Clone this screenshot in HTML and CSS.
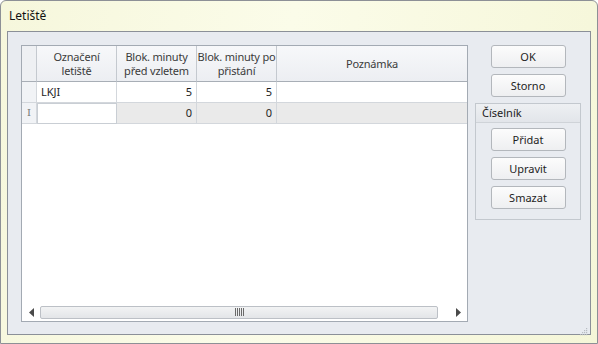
FILE: index.html
```html
<!DOCTYPE html>
<html lang="cs">
<head>
  <meta charset="UTF-8" />
  <title>Letiště</title>
  <link rel="stylesheet" href="styles.css">
</head>
<body>
  <div class="window">
    <div class="title">Letiště</div>
    <div class="client">
      <!-- grid -->
      <div class="grid">
        <div class="row head">
          <div class="cell ind"></div>
          <div class="cell c1">Označení<br>letiště</div>
          <div class="cell c2">Blok. minuty<br>před vzletem</div>
          <div class="cell c3">Blok. minuty po<br>přistání</div>
          <div class="cell c4">Poznámka</div>
        </div>
        <div class="row">
          <div class="cell ind"></div>
          <div class="cell c1 left">LKJI</div>
          <div class="cell c2 num">5</div>
          <div class="cell c3 num">5</div>
          <div class="cell c4"></div>
        </div>
        <div class="row newrow">
          <div class="cell ind"><span class="caret">I</span></div>
          <div class="cell c1 edit"></div>
          <div class="cell c2 num">0</div>
          <div class="cell c3 num">0</div>
          <div class="cell c4"></div>
        </div>
        <div class="empty"></div>
        <div class="hscroll">
          <div class="arrow">
            <svg width="6" height="9" viewBox="0 0 6 9"><path d="M5 0 L0 4.5 L5 9 Z" fill="#4a4a4a"/></svg>
          </div>
          <div class="track">
            <div class="thumb">
              <svg width="9" height="8" viewBox="0 0 9 8"><path d="M0.5 0v8M2.5 0v8M4.5 0v8M6.5 0v8M8.5 0v8" stroke="#6a6a6a" stroke-width="1"/></svg>
            </div>
          </div>
          <div class="arrow">
            <svg width="6" height="9" viewBox="0 0 6 9"><path d="M1 0 L6 4.5 L1 9 Z" fill="#4a4a4a"/></svg>
          </div>
        </div>
      </div>

      <!-- buttons -->
      <div class="side">
        <button class="btn">OK</button>
        <button class="btn">Storno</button>
        <div class="group">
          <div class="group-head">Číselník</div>
          <div class="group-body">
            <button class="btn">Přidat</button>
            <button class="btn">Upravit</button>
            <button class="btn">Smazat</button>
          </div>
        </div>
      </div>
      <div class="grip">
        <svg width="8" height="8" viewBox="0 0 8 8">
          <g fill="#b8bcc2">
            <rect x="6" y="0" width="1.2" height="1.2"/>
            <rect x="4" y="2" width="1.2" height="1.2"/><rect x="6" y="2" width="1.2" height="1.2"/>
            <rect x="2" y="4" width="1.2" height="1.2"/><rect x="4" y="4" width="1.2" height="1.2"/><rect x="6" y="4" width="1.2" height="1.2"/>
            <rect x="0" y="6" width="1.2" height="1.2"/><rect x="2" y="6" width="1.2" height="1.2"/><rect x="4" y="6" width="1.2" height="1.2"/><rect x="6" y="6" width="1.2" height="1.2"/>
          </g>
        </svg>
      </div>
    </div>
  </div>
</body>
</html>
```

FILE: styles.css
```css
html, body { margin: 0; padding: 0; }
body {
  font-family: "Noto Sans", "DejaVu Sans", sans-serif;
  font-size: 11px;
  color: #1e1e1e;
  background: #ffffff;
  width: 598px;
  height: 344px;
  overflow: hidden;
}
.window {
  box-sizing: border-box;
  width: 598px;
  height: 344px;
  background: linear-gradient(100deg, #f6f7dc 0%, #fbfce9 45%, #f5f6d8 100%);
  border: 1px solid #8d9096;
  border-radius: 6px 6px 0 0;
  padding: 0 6px 8px 6px;
  display: flex;
  flex-direction: column;
}
.title {
  height: 30px;
  line-height: 30px;
  padding-left: 2px;
  font-size: 12px;
  color: #111;
}
.client {
  position: relative;
  flex: 1;
  background: #e8ebf0;
  border: 1px solid #8b9098;
  padding: 13px 9px 12px 13px;
  display: flex;
  gap: 7px;
  align-items: flex-start;
}
.grid {
  box-sizing: border-box;
  width: 447px;
  height: 277px;
  background: #ffffff;
  border: 1px solid #a3aab3;
  display: flex;
  flex-direction: column;
}
.row { display: flex; height: 21px; }
.cell {
  box-sizing: border-box;
  border-right: 1px solid #d3d7dc;
  border-bottom: 1px solid #d3d7dc;
  padding: 0 4px;
  line-height: 20px;
}
.ind { width: 15px; padding: 0; background: #f1f3f6; }
.c1 { width: 80px; }
.c2, .c3 { width: 80px; }
.c4 { flex: 1; border-right: none; }
.head { height: 36px; }
.head .cell {
  background: linear-gradient(#f7f8fa, #eceef2);
  border-bottom: 1px solid #a8aeb6;
  border-right: 1px solid #c4c9cf;
  text-align: center;
  line-height: 14px;
  padding: 4px 0 0 0;
  white-space: nowrap;
  overflow: hidden;
  color: #3b3b3b;
  letter-spacing: -0.2px;
}
.head .c4 { padding-top: 11px; border-right: none; }
.head .ind { background: #eef0f3; }
.left { text-align: left; }
.num { text-align: right; }
.newrow .cell { background: #eaeaea; }
.newrow .ind { background: #f1f3f6; }
.newrow .edit { background: #ffffff; border: 1px solid #c9ced4; }
.caret {
  display: block;
  text-align: center;
  font-family: "DejaVu Serif", serif;
  font-size: 10px;
  color: #777;
}
.empty { flex: 1; }
.hscroll {
  height: 16px;
  display: flex;
  align-items: center;
  padding: 0 1px 1px 1px;
}
.arrow {
  width: 17px;
  height: 15px;
  display: flex;
  align-items: center;
  justify-content: center;
}
.track {
  flex: 1;
  display: flex;
  padding-right: 11px;
}
.thumb {
  flex: 1;
  height: 13px;
  box-sizing: border-box;
  border: 1px solid #bcc0c6;
  border-radius: 2px;
  background: linear-gradient(#f2f3f4, #e3e5e8);
  display: flex;
  align-items: center;
  justify-content: center;
}
.side {
  width: 106px;
  display: flex;
  flex-direction: column;
  align-items: center;
  gap: 6px;
}
.btn {
  box-sizing: border-box;
  width: 75px;
  height: 23px;
  font-family: inherit;
  font-size: 11px;
  color: #1e1e1e;
  border: 1px solid #b3b7bc;
  border-radius: 3px;
  background: linear-gradient(#fcfcfc, #eeeff1);
  padding: 0;
}
.group {
  box-sizing: border-box;
  width: 106px;
  border: 1px solid #c3c8ce;
}
.group-head {
  height: 18px;
  line-height: 18px;
  padding-left: 6px;
  background: linear-gradient(#eef0f3, #e2e5ea);
  border-bottom: 1px solid #cfd3d8;
  color: #222;
}
.group-body {
  display: flex;
  flex-direction: column;
  align-items: center;
  gap: 6px;
  padding: 5px 0 10px 0;
}
.grip {
  position: absolute;
  right: 2px;
  bottom: 2px;
  width: 8px;
  height: 8px;
}
```
